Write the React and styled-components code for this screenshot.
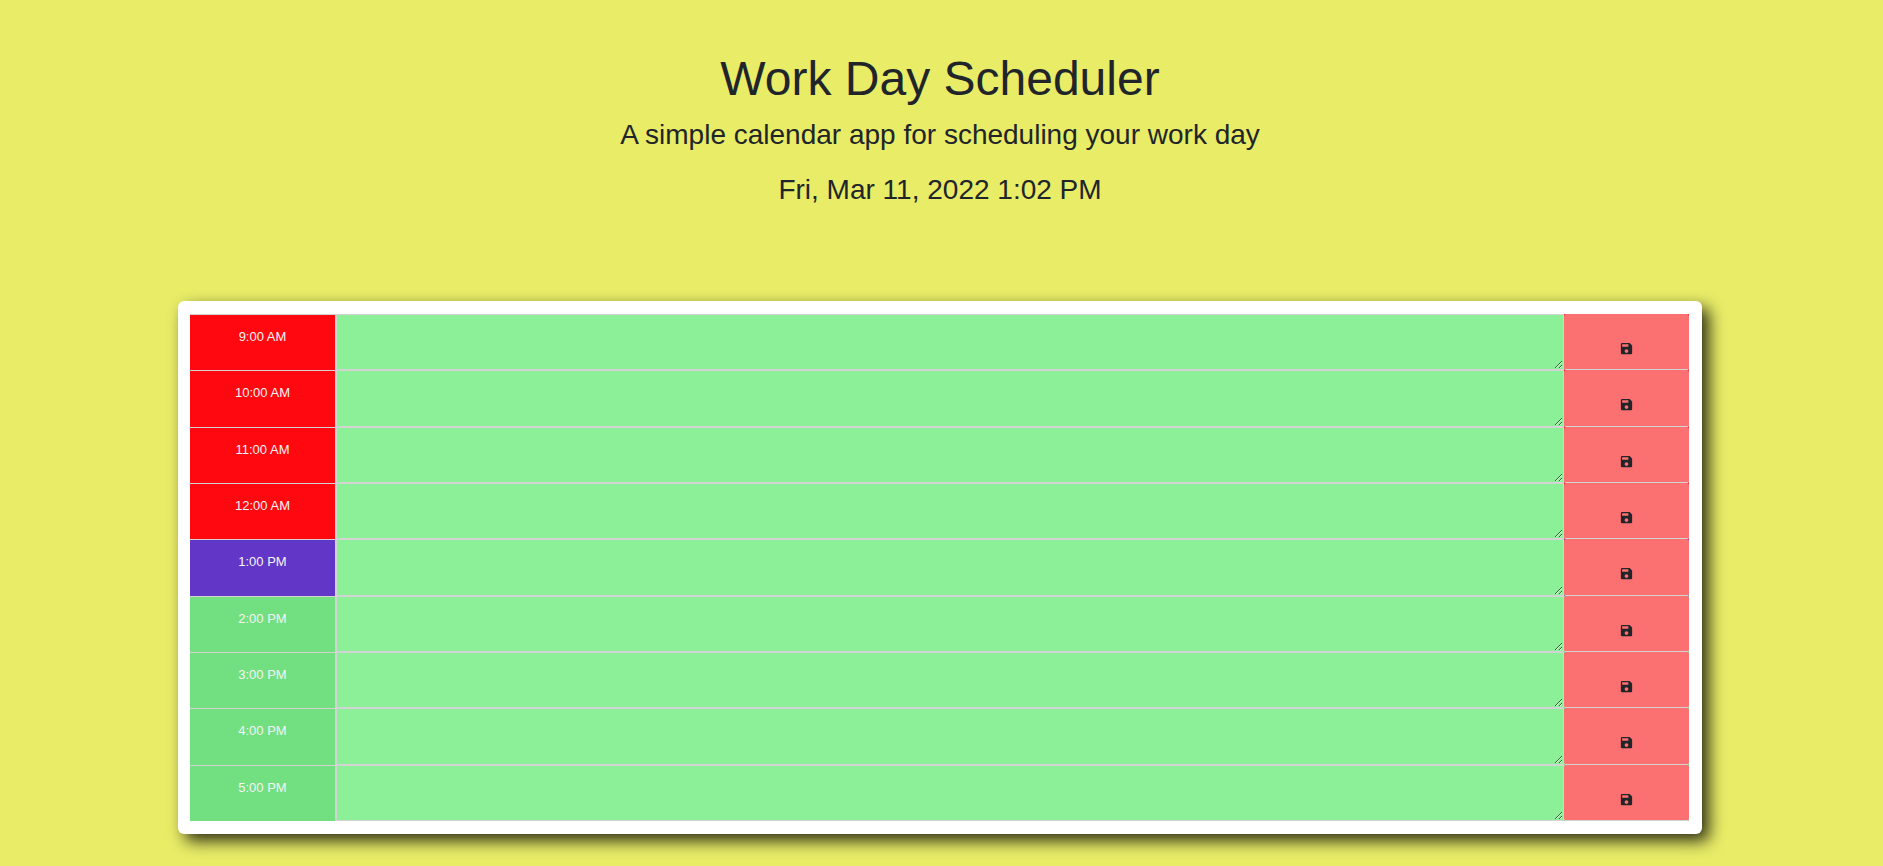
import React from "react";
import styled, { createGlobalStyle } from "styled-components";
import { MdSave } from "react-icons/md";

const GlobalStyle = createGlobalStyle`
  * { box-sizing: border-box; }
  body {
    margin: 0;
    min-height: 100vh;
    background: #e8ec67;
    color: #212529;
    font-family: "Liberation Sans", Arial, sans-serif;
    font-size: 16px;
    line-height: 24px;
  }
`;

const Page = styled.div`
  padding: 50px 181px 32px 178px;
`;

const Header = styled.header`
  height: 251px;
  text-align: center;
`;

const Title = styled.h1`
  margin: 0 0 6px;
  font-size: 48px;
  font-weight: 400;
  line-height: 58px;
`;

const Lead = styled.p`
  margin: 0 0 13px;
  font-size: 28px;
  line-height: 42px;
`;

const Card = styled.main`
  padding: 13px 13px 13px 12px;
  background: #fff;
  border-radius: 6px;
  box-shadow: 7px 7px 16px 0 rgba(0, 0, 0, 0.8);
`;

const Schedule = styled.div`
  display: grid;
  grid-auto-rows: 1fr;
  min-height: 507px;
`;

const tones = { past: "#ff0810", present: "#6236c6", future: "#72df80" };

const Row = styled.form`
  display: grid;
  grid-template-columns: 146px 1fr 125px;
  background: ${({ $tone }) => tones[$tone]};
`;

const Hour = styled.label`
  padding-top: 10px;
  border-top: 1px solid #d3d3d3;
  border-right: 1px solid #d3d3d3;
  color: #f5f5f5;
  font-size: 13px;
  text-align: center;
`;

const Note = styled.textarea`
  display: block;
  width: 100%;
  height: 100%;
  margin: 0;
  padding: 2px 8px;
  border: 1px solid #d3d3d3;
  outline: 0;
  background: #8cf098;
  color: #212529;
  font: inherit;
  resize: vertical;
`;

const SaveButton = styled.button`
  display: flex;
  justify-content: center;
  padding: 27px 0 0;
  border: 0;
  border-bottom: 1px solid #d3d3d3;
  border-radius: 2px;
  background: #fb7070;
  color: #212529;
  font-size: 15px;
  cursor: pointer;
`;

const hours = [
  ["9:00 AM", "past"],
  ["10:00 AM", "past"],
  ["11:00 AM", "past"],
  ["12:00 AM", "past"],
  ["1:00 PM", "present"],
  ["2:00 PM", "future"],
  ["3:00 PM", "future"],
  ["4:00 PM", "future"],
  ["5:00 PM", "future"],
];

export default function App() {
  return (
    <Page>
      <GlobalStyle />
      <Header>
        <Title>Work Day Scheduler</Title>
        <Lead>A simple calendar app for scheduling your work day</Lead>
        <Lead>Fri, Mar 11, 2022 1:02 PM</Lead>
      </Header>
      <Card>
        <Schedule>
          {hours.map(([hour, tone], i) => (
            <Row key={hour} $tone={tone} onSubmit={(e) => e.preventDefault()}>
              <Hour htmlFor={`note-${i}`}>{hour}</Hour>
              <Note id={`note-${i}`} />
              <SaveButton type="submit" aria-label={`Save ${hour}`}>
                <MdSave />
              </SaveButton>
            </Row>
          ))}
        </Schedule>
      </Card>
    </Page>
  );
}
